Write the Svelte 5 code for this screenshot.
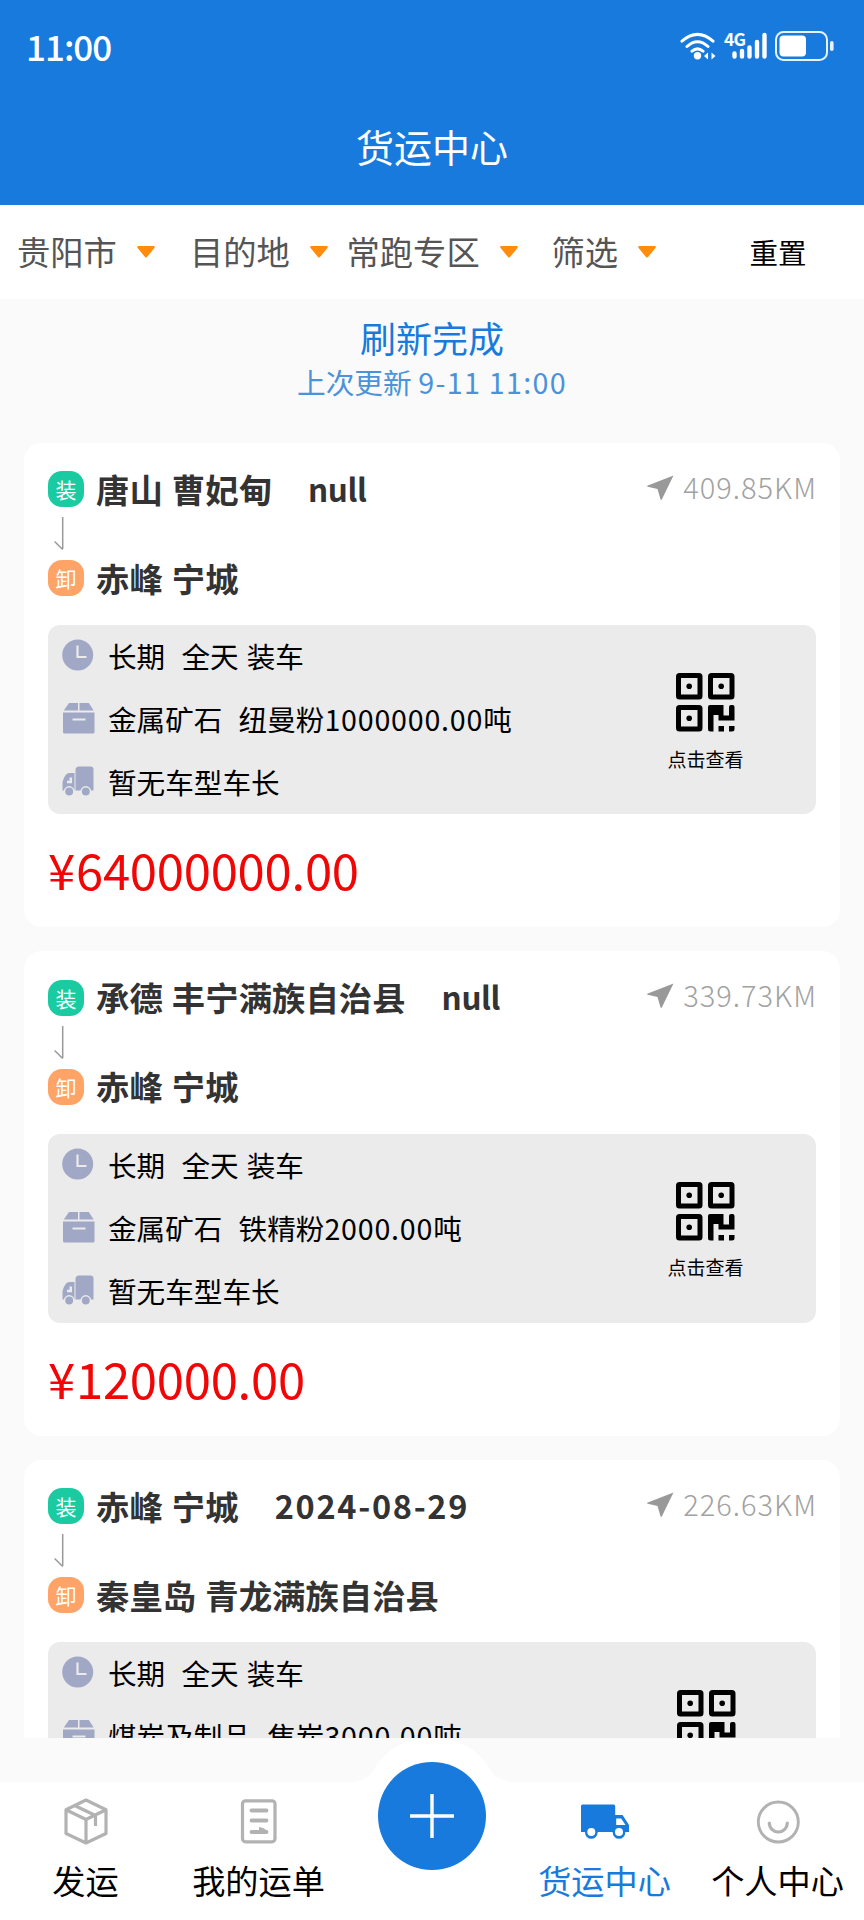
<script>
  const filters = ['贵阳市', '目的地', '常跑专区', '筛选'];

  const orders = [
    { from: '唐山 曹妃甸', date: 'null', to: '赤峰 宁城', distance: '409.85KM', goods: '金属矿石  纽曼粉', amount: '1000000.00', vehicle: '暂无车型车长', price: '64000000.00' },
    { from: '承德 丰宁满族自治县', date: 'null', to: '赤峰 宁城', distance: '339.73KM', goods: '金属矿石  铁精粉', amount: '2000.00', vehicle: '暂无车型车长', price: '120000.00' },
    { from: '赤峰 宁城', date: '2024-08-29', to: '秦皇岛 青龙满族自治县', distance: '226.63KM', goods: '煤炭及制品  焦炭', amount: '3000.00' }
  ];
</script>

<div class="app">
  <header>
    <div class="status">
      <span class="time">11:00</span>
      <div class="signals">
        <svg class="wifi" width="36" height="28" viewBox="0 0 36 28" fill="none" stroke="#fff" stroke-width="3" stroke-linecap="round">
          <path d="M2 9.2Q17.500-4.500 33 9.200M7 14.500Q17.500 5 28 14.500M12 19.200Q17.500 14.500 23 19.200" />
          <circle cx="17.500" cy="23.800" r="3.700" fill="#fff" stroke="none" />
          <path d="M24 24l4-3.600v7.200zM35.500 24l-4-3.600v7.200z" fill="#fff" stroke="none" />
        </svg>
        <div class="cell">
          <span class="gen">4G</span>
          <svg width="36" height="28" viewBox="0 0 36 28" stroke="#fff" stroke-width="4.400" stroke-linecap="round">
            <path d="M3.500 21.500V24.500M11 19V24.500M18.500 15.500V24.500M26 10V24.500M33.500 3V24.500" />
          </svg>
        </div>
        <svg class="battery" width="59" height="30" viewBox="0 0 59 30">
          <rect x="1" y="1" width="51" height="28" rx="7.500" fill="none" stroke="#e4f3ff" stroke-width="2" />
          <rect x="4.500" y="4.500" width="26.500" height="21" rx="4" fill="#fff" />
          <rect x="55" y="10" width="3.600" height="10" rx="1.800" fill="#e4f3ff" />
        </svg>
      </div>
    </div>
    <h1>货运中心</h1>
  </header>

  <nav class="filters">
    {#each filters as name}
      <div class="filter">
        <span>{name}</span>
        <svg width="18" height="12" viewBox="0 0 18 12"><path d="M1.200 0h15.600q1.800.6.600 2L10 11q-1 1-2 0L.6 2Q-.6.6 1.200 0z" fill="#ff8c0a" /></svg>
      </div>
    {/each}
    <div class="reset">重置</div>
  </nav>

  <main>
    <div class="refresh">
      <p class="done">刷新完成</p>
      <p class="updated">上次更新 <span>9-11 11:00</span></p>
    </div>

    {#each orders as order}
      <article>
        <div class="place">
          <i class="badge load">装</i>
          <b>{order.from}</b>
          <b class="date" class:day={order.date !== 'null'}>{order.date}</b>
          <div class="distance">
            <svg width="27" height="26" viewBox="0 0 27 26"><path d="M26.500.5 14.800 24.500q-.8 1.200-1.300-.2L10.500 14 .8 11.800q-1.400-.6 0-1.300z" fill="#999" /></svg>
            <span>{order.distance}</span>
          </div>
        </div>
        <svg class="down" width="10" height="34" viewBox="0 0 10 34" fill="none" stroke="#999" stroke-width="1.500"><path d="M8.700 0V32M.6 24.500 8.700 32.500" /></svg>
        <div class="place">
          <i class="badge unload">卸</i>
          <b>{order.to}</b>
        </div>

        <div class="detail">
          <ul>
            <li>
              <svg width="33" height="33" viewBox="0 0 33 33"><circle cx="15.700" cy="16" r="15.500" fill="#a0a8c5" /><path d="M15.500 6.500V18h9" fill="none" stroke="#ebebeb" stroke-width="2.200" /></svg>
              <span>长期  全天 装车</span>
            </li>
            <li>
              <svg width="33" height="33" viewBox="0 0 33 33"><path d="M7 1h9v7.500H1.800zM17.500 1h9.300l4.900 7.500H17.500zM1 10.500h31.500V30q0 1.500-1.500 1.500H2.500Q1 31.500 1 30zM10.500 16.500v2h13v-2z" fill="#a0a8c5" fill-rule="evenodd" /></svg>
              <span>{order.goods}<em>{order.amount}</em>吨</span>
            </li>
            {#if order.vehicle}
              <li>
                <svg width="33" height="33" viewBox="0 0 33 33">
                  <path d="M17 1.500h11.500q3 0 3 3V25.500h-18V5q0-3.500 3.500-3.500zM7.500 8H12.500V25.500H.5V17Q3 8 7.500 8z" fill="#a0a8c5" />
                  <path d="M8.800 12.500v4.500H5" fill="none" stroke="#ebebeb" stroke-width="2.500" />
                  <circle cx="7.200" cy="26.500" r="4.700" fill="#a0a8c5" stroke="#ebebeb" stroke-width="1.500" />
                  <circle cx="23.800" cy="26.500" r="4.700" fill="#a0a8c5" stroke="#ebebeb" stroke-width="1.500" />
                </svg>
                <span>{order.vehicle}</span>
              </li>
            {/if}
          </ul>
          <div class="qr">
            <svg width="60" height="60" viewBox="0 0 60 60">
              <g fill="none" stroke="#000" stroke-width="5">
                <rect x="3.500" y="3.500" width="21.500" height="21.500" rx="1" />
                <rect x="35.500" y="3.500" width="21.500" height="21.500" rx="1" />
                <rect x="3.500" y="35.500" width="21.500" height="21.500" rx="1" />
              </g>
              <circle cx="14.200" cy="14.200" r="2.800" /><circle cx="46.200" cy="14.200" r="2.800" /><circle cx="14.200" cy="46.200" r="2.800" />
              <path d="M35 33H48.500V43.500H54V35Q54 33 56 33H57.500Q59.500 33 59.500 35V48.500H43.500V43H38.500V59.500H35.500Q33 59.500 33 57V35Q33 33 35 33zM43.500 54h5.500v5.500h-5.500zM54 54h5.500v3q0 2.500-2.500 2.500h-3z" />
            </svg>
            {#if order.vehicle}<span>点击查看</span>{/if}
          </div>
        </div>

        {#if order.price}
          <p class="price"><span>¥</span>{order.price}</p>
        {/if}
      </article>
    {/each}
  </main>

  <footer>
    <svg class="shape" width="864" height="182" viewBox="0 0 864 182"><path d="M0 44H352Q367 43 374 31C386 11 406 0 432 0S478 11 490 31Q497 43 512 44H864V182H0z" fill="#fff" /></svg>
    <div class="tabs">
      <div class="tab">
        <svg width="48" height="48" viewBox="0 0 48 48" fill="none" stroke="#b2b2b2" stroke-width="3.200" stroke-linejoin="round">
          <path d="M24 3 44 12.800V36.500L24 46 4 36.500V12.800zM4 12.800 24 22.500 44 12.800M24 22.500V46M12.500 8.500 33.500 18.500V29" />
        </svg>
        <span>发运</span>
      </div>
      <div class="tab">
        <svg width="48" height="48" viewBox="0 0 48 48" fill="none" stroke="#b2b2b2" stroke-width="3.200" stroke-linecap="round">
          <rect x="7.500" y="3.800" width="32.500" height="41" rx="3" />
          <path d="M16.500 13.500H31.500M16.500 23.500H31.500" stroke-width="3.800" />
          <path d="M16.500 35H31.500" stroke-width="3.800" /><path d="M24.500 34V30.500Q29 31 32.500 34.500z" fill="#b2b2b2" stroke-width="1" />
        </svg>
        <span>我的运单</span>
      </div>
      <div class="tab middle">
        <div class="plus">
          <svg width="44" height="44" viewBox="0 0 44 44" stroke="#fff" stroke-width="3.400"><path d="M0 22H44M22 0V44" /></svg>
        </div>
      </div>
      <div class="tab active">
        <svg width="48" height="48" viewBox="0 0 48 48">
          <path d="M1.500 7.500H32.500Q34.200 7.500 34.200 9.200V18H41.500L48 28V35H42.800A6 6 0 0 1 32 35H16.500A6 6 0 0 1 5.500 35H0V9Q0 7.500 1.500 7.500z" fill="#187adc" />
          <path d="M35.200 21.500H40.200L44.500 28H35.200z" fill="#fff" />
          <circle cx="10.300" cy="35.500" r="6.300" fill="#187adc" /><circle cx="38" cy="35.500" r="6.300" fill="#187adc" />
          <circle cx="10.300" cy="35" r="4" fill="#fff" /><circle cx="38" cy="35" r="4" fill="#fff" />
        </svg>
        <span>货运中心</span>
      </div>
      <div class="tab">
        <svg width="48" height="48" viewBox="0 0 48 48" fill="none" stroke="#b2b2b2" stroke-width="2.900" stroke-linecap="round">
          <circle cx="24.300" cy="25" r="20" /><path d="M15.300 26A9 9 0 0 0 33.300 26" stroke-width="3.200" />
        </svg>
        <span>个人中心</span>
      </div>
    </div>
  </footer>
</div>

<style>
  :global(body) { margin: 0; background: #fafafa; }
  .app {
    width: 864px; height: 1920px; display: flex; flex-direction: column; overflow: hidden;
    background: #fafafa; color: #000;
    font-family: "Noto Sans CJK SC", "Noto Sans", sans-serif; line-height: 1;
  }
  svg { display: block; flex: none; }
  p, h1, ul { margin: 0; padding: 0; }
  span, b { white-space: pre; }

  header { height: 205px; flex: none; background: #187adc; color: #fff; }
  .status { height: 91px; display: flex; justify-content: space-between; box-sizing: border-box; padding: 0 30px 0 26px; align-items: center; }
  .time { font-size: 35px; font-weight: 500; letter-spacing: -1px; line-height: 90px; }
  .signals { display: flex; align-items: center; padding-top: 1px; }
  .wifi { margin-right: 10px; }
  .cell { position: relative; margin-right: 8px; padding-left: 5px; }
  .gen { position: absolute; left: -2px; top: -1px; font-size: 17.500px; font-weight: 700; line-height: 15px; letter-spacing: -.8px; }
  h1 { font-size: 38px; font-weight: 400; text-align: center; line-height: 109px; }

  .filters {
    height: 94px; flex: none; display: grid; align-items: center; background: #fff; padding-left: 17px;
    grid-template-columns: 173px 156.500px 205px 151px 151px;
  }
  .filter { display: flex; align-items: center; gap: 20px; font-size: 33.300px; color: #555; }
  .filter span { line-height: 32px; margin-bottom: 2px; }
  .reset { font-size: 28.500px; text-align: center; }

  main { height: 1438.500px; flex: none; overflow: hidden; padding: 0 24px; }
  .refresh { height: 143.500px; text-align: center; box-sizing: border-box; padding-top: 20px; }
  .done { font-size: 36px; line-height: 36px; color: #187adc; }
  .updated { font-size: 28.700px; line-height: 29px; margin-top: 12px; color: #4a93da; }
  .updated span { letter-spacing: 1.300px; }

  article { height: 484.500px; margin-bottom: 24px; background: #fff; border-radius: 18px; box-sizing: border-box; padding: 28.500px 24px 0; }
  .place { height: 36px; display: flex; align-items: center; color: #333; font-size: 33.400px; }
  .place b { word-spacing: 1.500px; margin-top: -1px; }
  .badge { width: 36px; height: 36px; border-radius: 14px; color: #fff; font-size: 21px; font-style: normal; text-align: center; line-height: 36px; margin-right: 12px; }
  .load { background: #1acba2; }
  .unload { background: #ffa366; }
  .place .date { margin-left: 36px; font-size: 31.500px; letter-spacing: -.4px; }
  .place .date.day { letter-spacing: 1.700px; font-size: 32.500px; }
  .distance { margin-left: auto; display: flex; align-items: center; gap: 9px; color: #a2a2a2; font-size: 29px; font-weight: 300; letter-spacing: 1px; margin-right: -1px; margin-top: -6px; }
  .distance svg { margin-top: 3px; }
  .down { margin: 10px 0 9px 6px; }

  .detail { height: 189px; margin-top: 29px; background: #ebebeb; border-radius: 12px; display: flex; justify-content: space-between; box-sizing: border-box; padding: 0 72.500px 0 14px; }
  ul { list-style: none; display: grid; grid-template-rows: repeat(3, 63px); }
  li { display: flex; align-items: center; gap: 13px; font-size: 28.600px; word-spacing: 1.700px; }
  li svg { margin-top: -2px; }
  em { font-style: normal; letter-spacing: .8px; }
  .qr { display: flex; flex-direction: column; align-items: center; padding-top: 47px; gap: 16.500px; font-size: 19px; min-width: 76px; }
  .price { color: #f20505; font-size: 49px; line-height: 110px; letter-spacing: -.25px; }
  .price span { margin-right: 1px; }

  footer { position: relative; height: 182.500px; flex: none; }
  .shape { position: absolute; left: 0; bottom: 0; }
  .tabs { position: relative; display: grid; grid-template-columns: repeat(5, 1fr); padding-top: 59px; margin-left: -1px; }
  .tab { display: flex; flex-direction: column; align-items: center; gap: 18px; font-size: 33.200px; }
  .active { color: #187adc; }
  .plus { width: 108px; height: 108px; margin-top: -35px; border-radius: 50%; background: #187adc; display: flex; align-items: center; justify-content: center; }
</style>
